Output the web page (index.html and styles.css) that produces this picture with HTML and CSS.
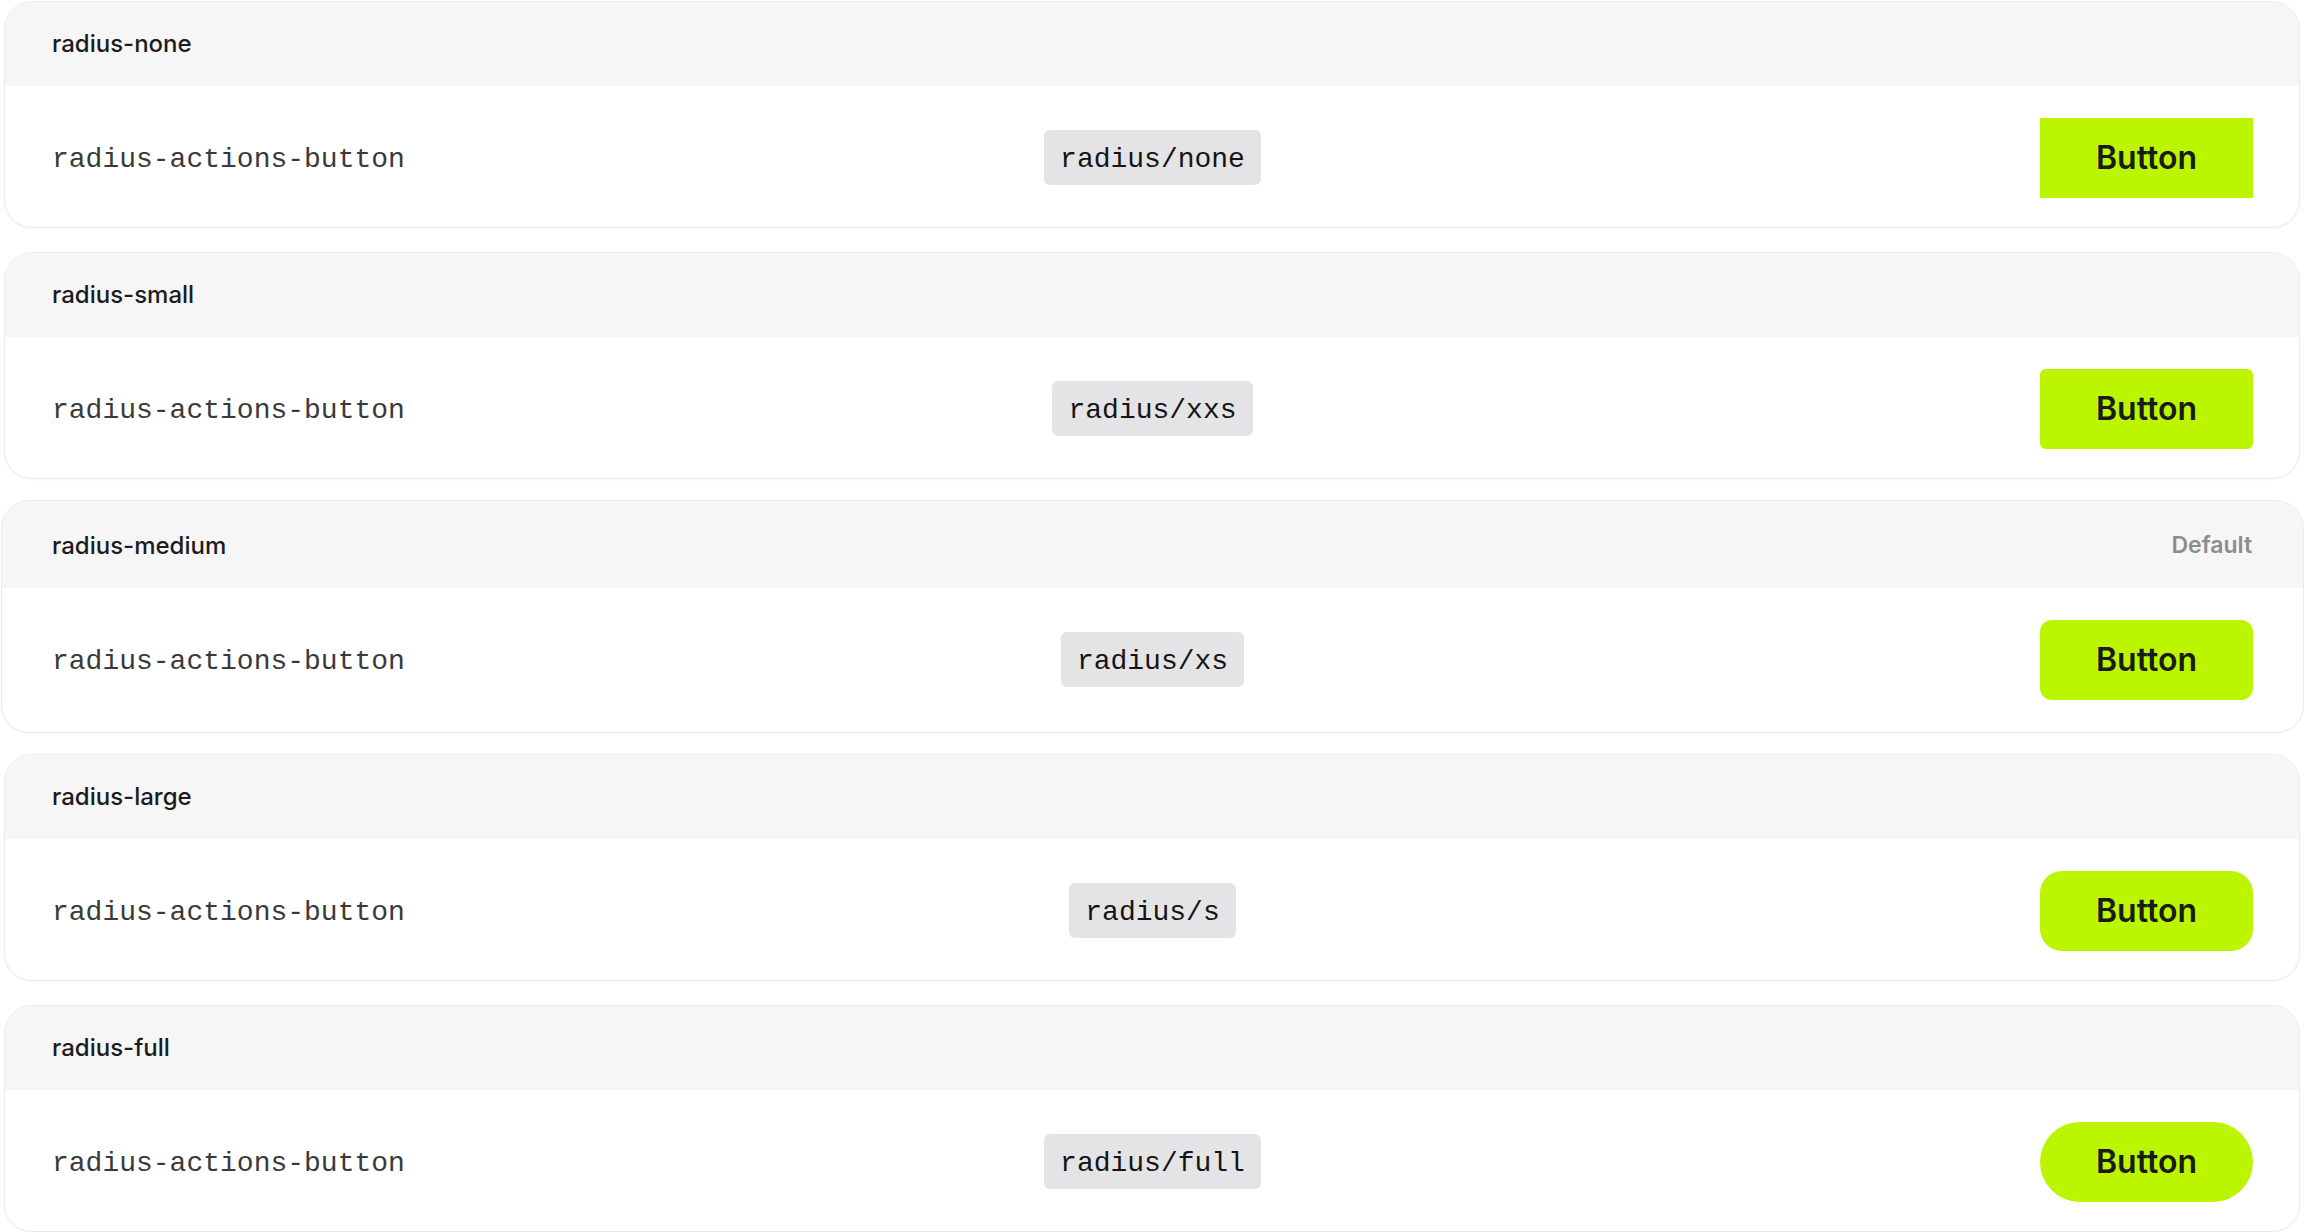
FILE: index.html
```html
<!DOCTYPE html>
<html>
<head>
  <title>Radius tokens</title>
<link rel="stylesheet" href="styles.css">
</head>
<body>
  <div class="list">
    <div class="card">
      <div class="card-head"><span class="name">radius-none</span></div>
      <div class="card-body">
        <span class="token">radius-actions-button</span>
        <span class="badge">radius/none</span>
        <div class="end"><button class="btn r-none">Button</button></div>
      </div>
    </div>
    <div class="card">
      <div class="card-head"><span class="name">radius-small</span></div>
      <div class="card-body">
        <span class="token">radius-actions-button</span>
        <span class="badge">radius/xxs</span>
        <div class="end"><button class="btn r-small">Button</button></div>
      </div>
    </div>
    <div class="card card-active">
      <div class="card-head"><span class="name">radius-medium</span><span class="tag">Default</span></div>
      <div class="card-body">
        <span class="token">radius-actions-button</span>
        <span class="badge">radius/xs</span>
        <div class="end"><button class="btn r-medium">Button</button></div>
      </div>
    </div>
    <div class="card">
      <div class="card-head"><span class="name">radius-large</span></div>
      <div class="card-body">
        <span class="token">radius-actions-button</span>
        <span class="badge">radius/s</span>
        <div class="end"><button class="btn r-large">Button</button></div>
      </div>
    </div>
    <div class="card">
      <div class="card-head"><span class="name">radius-full</span></div>
      <div class="card-body">
        <span class="token">radius-actions-button</span>
        <span class="badge">radius/full</span>
        <div class="end"><button class="btn r-full">Button</button></div>
      </div>
    </div>
  </div>
</body>
</html>
```

FILE: styles.css
```css
body {
  margin: 0;
  background: #ffffff;
  font-family: Inter, "Noto Sans", sans-serif;
  overflow: hidden;
}

.list {
  display: flex;
  flex-direction: column;
  gap: 24px;
  padding: 1px 4px 0 4px;
}

.card {
  height: 227px;
  box-sizing: border-box;
  display: flex;
  flex-direction: column;
  border: 1px solid #ebebeb;
  border-radius: 28px;
  overflow: hidden;
  background: #ffffff;
  box-shadow: 0 1px 2px rgba(0, 0, 0, 0.04);
}

.card-active {
  height: 233px;
  margin: -3px -4px -3px -3px;
}

.card-head {
  height: 84px;
  box-sizing: border-box;
  flex-shrink: 0;
  display: flex;
  align-items: center;
  justify-content: space-between;
  padding: 0 47px 2px 47px;
  background: #f6f6f6;
}

.card-active .card-head {
  height: 87px;
  padding: 3px 51px 2px 50px;
}

.name {
  font-size: 24px;
  font-weight: 500;
  color: #1c1c1c;
}

.tag {
  font-size: 23px;
  font-weight: 600;
  color: #8d8d8f;
}

.card-body {
  flex: 1;
  display: grid;
  grid-template-columns: 1fr auto 1fr;
  align-items: center;
  padding: 2px 46px 0 47px;
}

.card-active .card-body {
  padding: 2px 50px 3px 50px;
}

.token {
  font-family: "Liberation Mono", "DejaVu Sans Mono", monospace;
  font-size: 28px;
  color: #3a3a3a;
  padding-top: 4px;
}

.badge {
  font-family: "Liberation Mono", "DejaVu Sans Mono", monospace;
  font-size: 28px;
  line-height: 35px;
  color: #141414;
  background: #e4e4e6;
  border-radius: 6px;
  padding: 12px 16px 8px 16px;
}

.end {
  display: flex;
  justify-content: flex-end;
}

.btn {
  width: 213px;
  height: 80px;
  border: none;
  background: #bbf500;
  color: #1a1a1a;
  font-family: Inter, "Noto Sans", sans-serif;
  font-size: 32px;
  font-weight: 600;
}

.r-none { border-radius: 0; }
.r-small { border-radius: 6px; }
.r-medium { border-radius: 12px; }
.r-large { border-radius: 22px; }
.r-full { border-radius: 40px; }
```
